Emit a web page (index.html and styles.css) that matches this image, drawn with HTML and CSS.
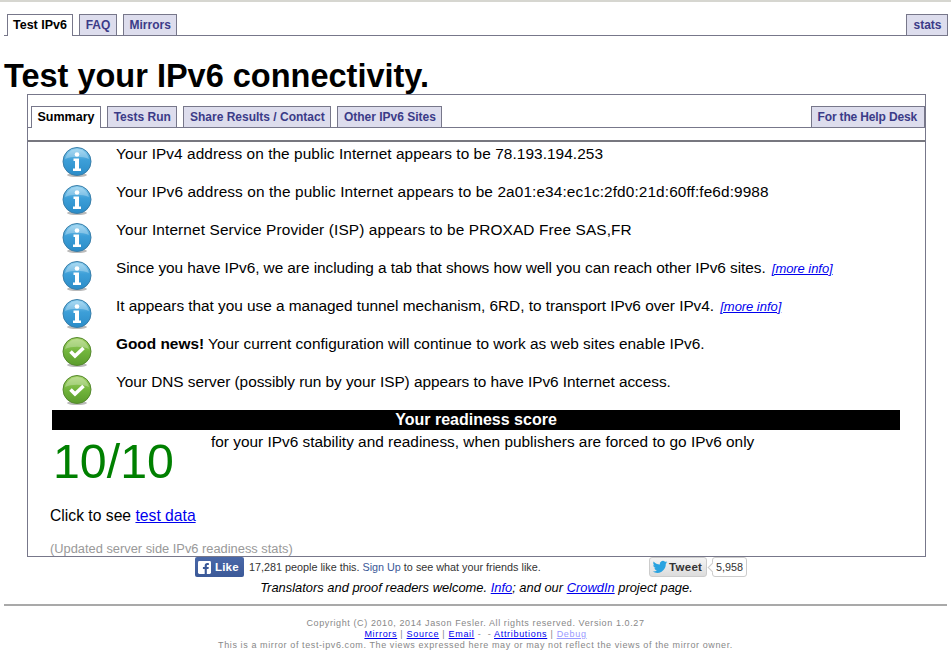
FILE: index.html
```html
<!DOCTYPE html>
<html lang="en">
<head>
<meta charset="utf-8">
<title>Test your IPv6 connectivity</title>
<link rel="stylesheet" href="styles.css">
</head>
<body>
<svg class="defs" width="0" height="0" aria-hidden="true">
  <defs>
    <linearGradient id="blue" x1="0" y1="0" x2="0" y2="1">
      <stop offset="0" stop-color="#8fd0f0"/><stop offset=".45" stop-color="#3d9fd8"/><stop offset="1" stop-color="#2b8cc8"/>
    </linearGradient>
    <linearGradient id="green" x1="0" y1="0" x2="0" y2="1">
      <stop offset="0" stop-color="#a6d46a"/><stop offset=".5" stop-color="#72b53c"/><stop offset="1" stop-color="#5b9c2c"/>
    </linearGradient>
    <symbol id="info" viewBox="0 0 30 30">
      <ellipse cx="15" cy="28" rx="10" ry="2" fill="#bbb"/>
      <circle cx="15" cy="14.500" r="14" fill="url(#blue)" stroke="#3a7ea8" stroke-width="1"/>
      <path d="M3 12C5 5 10 2 15 2s10 3 12 10c-7-3-17-3-24 0z" fill="#fff" opacity=".28"/>
      <circle cx="15" cy="7.500" r="2.300" fill="#fff"/>
      <path d="M11.500 11.500h5.500v10h2v2.500h-8v-2.500h2v-7.500h-1.500z" fill="#fff"/>
    </symbol>
    <symbol id="ok" viewBox="0 0 30 30">
      <ellipse cx="15" cy="28" rx="10" ry="2" fill="#bbb"/>
      <circle cx="15" cy="14.500" r="14" fill="url(#green)" stroke="#55882e" stroke-width="1"/>
      <path d="M3 12C5 5 10 2 15 2s10 3 12 10c-7-3-17-3-24 0z" fill="#fff" opacity=".28"/>
      <path d="M8.500 14.500l4.500 4.500 8.500-8" fill="none" stroke="#fff" stroke-width="3.600"/>
    </symbol>
  </defs>
</svg>
<div class="topline"></div>
<nav class="tabs main-tabs">
  <a class="tab active">Test IPv6</a>
  <a class="tab">FAQ</a>
  <a class="tab">Mirrors</a>
  <a class="tab right">stats</a>
</nav>
<h1>Test your IPv6 connectivity.</h1>
<main class="panel">
  <nav class="tabs sub-tabs">
    <a class="tab active">Summary</a>
    <a class="tab">Tests Run</a>
    <a class="tab">Share Results / Contact</a>
    <a class="tab">Other IPv6 Sites</a>
    <a class="tab right">For the Help Desk</a>
  </nav>
  <div class="rule"></div>
  <section class="rows">
    <div class="row"><svg class="icon"><use href="#info"/></svg><p class="sp-wide">Your IPv4 address on the public Internet appears to be 78.193.194.253</p></div>
    <div class="row"><svg class="icon"><use href="#info"/></svg><p class="sp-mid">Your IPv6 address on the public Internet appears to be 2a01:e34:ec1c:2fd0:21d:60ff:fe6d:9988</p></div>
    <div class="row"><svg class="icon"><use href="#info"/></svg><p class="sp-wider">Your Internet Service Provider (ISP) appears to be PROXAD Free SAS,FR</p></div>
    <div class="row"><svg class="icon"><use href="#info"/></svg><p class="sp-tighter">Since you have IPv6, we are including a tab that shows how well you can reach other IPv6 sites. <a class="more" href="#">[more info]</a></p></div>
    <div class="row"><svg class="icon"><use href="#info"/></svg><p class="sp-tight">It appears that you use a managed tunnel mechanism, 6RD, to transport IPv6 over IPv4. <a class="more" href="#">[more info]</a></p></div>
    <div class="row"><svg class="icon"><use href="#ok"/></svg><p><b>Good news!</b> Your current configuration will continue to work as web sites enable IPv6.</p></div>
    <div class="row"><svg class="icon"><use href="#ok"/></svg><p class="sp-tight">Your DNS server (possibly run by your ISP) appears to have IPv6 Internet access.</p></div>
  </section>
  <div class="score-bar">Your readiness score</div>
  <div class="score">
    <div class="score-num">10/10</div>
    <div class="score-text">for your IPv6 stability and readiness, when publishers are forced to go IPv6 only</div>
  </div>
  <p class="click">Click to see <a href="#">test data</a></p>
  <p class="updated">(Updated server side IPv6 readiness stats)</p>
</main>
<div class="social">
  <span class="fb-btn"><svg class="fb-f" viewBox="0 0 14 14"><rect width="14" height="14" rx="1.500" fill="#fff"/><path d="M9.500 14V8.600h1.800l.3-2.100H9.500V5.200c0-.6.200-1 1-1h1.200V2.300c-.2 0-.9-.1-1.700-.1-1.700 0-2.800 1-2.800 2.900v1.400H5.300v2.100h1.900V14z" fill="#3b5998"/></svg>Like</span>
  <span class="fb-text">17,281 people like this. <a href="#">Sign Up</a> to see what your friends like.</span>
  <span class="tw-btn"><svg class="tw-bird" viewBox="0 0 24 24"><path d="M23 5c-.8.4-1.700.6-2.600.7.900-.6 1.600-1.400 2-2.500-.9.500-1.800.9-2.900 1.100a4.500 4.500 0 0 0-7.700 4.100C8 8.200 4.700 6.400 2.500 3.700c-1.200 2-.6 4.600 1.400 6-.7 0-1.400-.2-2-.6 0 2.200 1.500 4.100 3.600 4.500-.7.200-1.400.2-2 .1.600 1.800 2.200 3.100 4.200 3.100A9 9 0 0 1 1 18.700 12.800 12.800 0 0 0 20.700 7.300c.9-.6 1.700-1.400 2.300-2.300z" fill="#2aa3e0"/></svg>Tweet</span>
  <span class="tw-count">5,958</span>
</div>
<p class="translators">Translators and proof readers welcome. <a href="#">Info</a>; and our <a href="#">CrowdIn</a> project page.</p>
<footer class="footer">
  <div>Copyright (C) 2010, 2014 Jason Fesler. All rights reserved. Version 1.0.27</div>
  <div class="footer-links"><a href="#">Mirrors</a> | <a href="#">Source</a> | <a href="#">Email</a> - &nbsp;- <a href="#">Attributions</a> | <a class="debug" href="#">Debug</a></div>
  <div>This is a mirror of test-ipv6.com. The views expressed here may or may not reflect the views of the mirror owner.</div>
</footer>
</body>
</html>
```
FILE: styles.css
```css
* { box-sizing: border-box; }
html, body { margin: 0; padding: 0; }
body {
  height: 657px;
  overflow: hidden;
  background: #fff;
  color: #000;
  font-family: "Liberation Sans", Arial, sans-serif;
  font-size: 15.4px;
}
.defs { position: absolute; }
.topline { height: 3px; background: #fff; border-top: 2px solid #d6d6d0; }

.tabs { display: flex; align-items: flex-end; border-bottom: 1px solid #77778a; }
.tab {
  display: block;
  height: 21px;
  padding: 0 5.5px;
  border: 1px solid #77778a;
  border-bottom: 0;
  background: #dddded;
  color: #3b3b88;
  font-size: 12px;
  font-weight: bold;
  line-height: 20px;
}
.tab.active { background: #fff; color: #000; height: 22px; margin-bottom: -1px; font-size: 12.5px; padding: 0 5.5px; }
.tab.right { margin-left: auto; }
.main-tabs { margin: 11px 3px 0 4px; padding-left: 3px; height: 22px; gap: 6.2px; }
.main-tabs .active { padding: 0 5px; }
.main-tabs .right { padding: 0 5.5px 0 6px; }

h1 { margin: 22px 0 0 4px; font-size: 32.5px; line-height: 37px; font-weight: bold; }

.panel {
  width: 899px;
  height: 463px;
  margin: -1px 0 0 27px;
  border: 1px solid #77778a;
}
.sub-tabs { margin-top: 11px; height: 22px; padding-left: 3px; gap: 6.2px; }
.sub-tabs .tab.right { letter-spacing: -0.15px; padding: 0 7px 0 5.5px; }
.rule { height: 2px; margin-top: 12px; background: #77777f; }

.rows { display: flex; flex-direction: column; }
.row { display: flex; height: 38px; padding-top: 3px; }
.icon { width: 30px; height: 30px; margin: 2px 0 0 34px; flex: none; }
.row p { margin: 0 0 0 24px; line-height: 18px; }
.row .sp-wide { letter-spacing: 0.06px; }
.row .sp-mid { letter-spacing: 0.1px; }
.row .sp-wider { letter-spacing: 0.12px; }
.row .sp-tight { letter-spacing: -0.04px; }
.row .sp-tighter { letter-spacing: -0.06px; }
.more { font-size: 13px; font-style: italic; margin-left: 2px; }
a { color: #00e; }

.score-bar {
  margin: 2px 25px 0 24px;
  height: 20px;
  background: #000;
  color: #fff;
  font-weight: bold;
  font-size: 16px;
  text-align: center;
  line-height: 20px;
}
.score { display: flex; height: 59px; margin-left: 25px; }
.score-num { width: 158px; font-size: 48.3px; line-height: 55px; padding-top: 4px; color: #008000; }
.score-text { line-height: 18px; padding-top: 3px; }
.click { margin: 18px 0 0 22px; line-height: 18px; font-size: 15.7px; }
.updated { margin: 17px 0 0 22px; font-size: 12.85px; line-height: 14px; color: #999; }

.social { display: flex; align-items: center; height: 22px; margin-top: -1px; padding-left: 195px; font-size: 10.8px; }
.fb-btn {
  display: flex;
  align-items: center;
  gap: 4px;
  width: 49px;
  height: 20px;
  padding-left: 3px;
  background: linear-gradient(#4a68a8, #3b5998);
  border-radius: 2px;
  color: #fff;
  font-size: 11.5px;
  font-weight: bold;
  letter-spacing: 0.2px;
}
.fb-f { width: 13px; height: 13px; }
.fb-text { margin-left: 5px; width: 400px; color: #333; }
.fb-text a { color: #3b5998; text-decoration: none; }
.tw-btn {
  display: flex;
  align-items: center;
  gap: 1px;
  width: 58px;
  height: 20px;
  padding-left: 2px;
  background: linear-gradient(#f4f4f4, #dcdcdc);
  border: 1px solid #ccc;
  border-radius: 3px;
  color: #333;
  font-size: 11.5px;
  font-weight: bold;
  letter-spacing: 0.3px;
}
.tw-bird { width: 16px; height: 16px; }
.tw-count {
  position: relative;
  margin-left: 5px;
  height: 20px;
  width: 35px;
  text-align: center;
  line-height: 18px;
  border: 1px solid #ccc;
  border-radius: 3px;
  color: #333;
}
.tw-count::before {
  content: "";
  position: absolute;
  left: -4px;
  top: 6px;
  width: 6px;
  height: 6px;
  background: #fff;
  border-left: 1px solid #ccc;
  border-bottom: 1px solid #ccc;
  transform: rotate(45deg);
}
.translators { margin: 2px 0 0; padding-left: 2px; text-align: center; font-size: 12.9px; font-style: italic; line-height: 16px; }
.footer {
  margin: 8px 4px 0;
  padding-top: 12px;
  border-top: 2px solid #a9a9a9;
  text-align: center;
  color: #888;
  font-size: 9px;
  letter-spacing: 0.6px;
  line-height: 11px;
}
.footer-links { letter-spacing: 0.68px; }
.footer .debug { color: #99f; }
```
